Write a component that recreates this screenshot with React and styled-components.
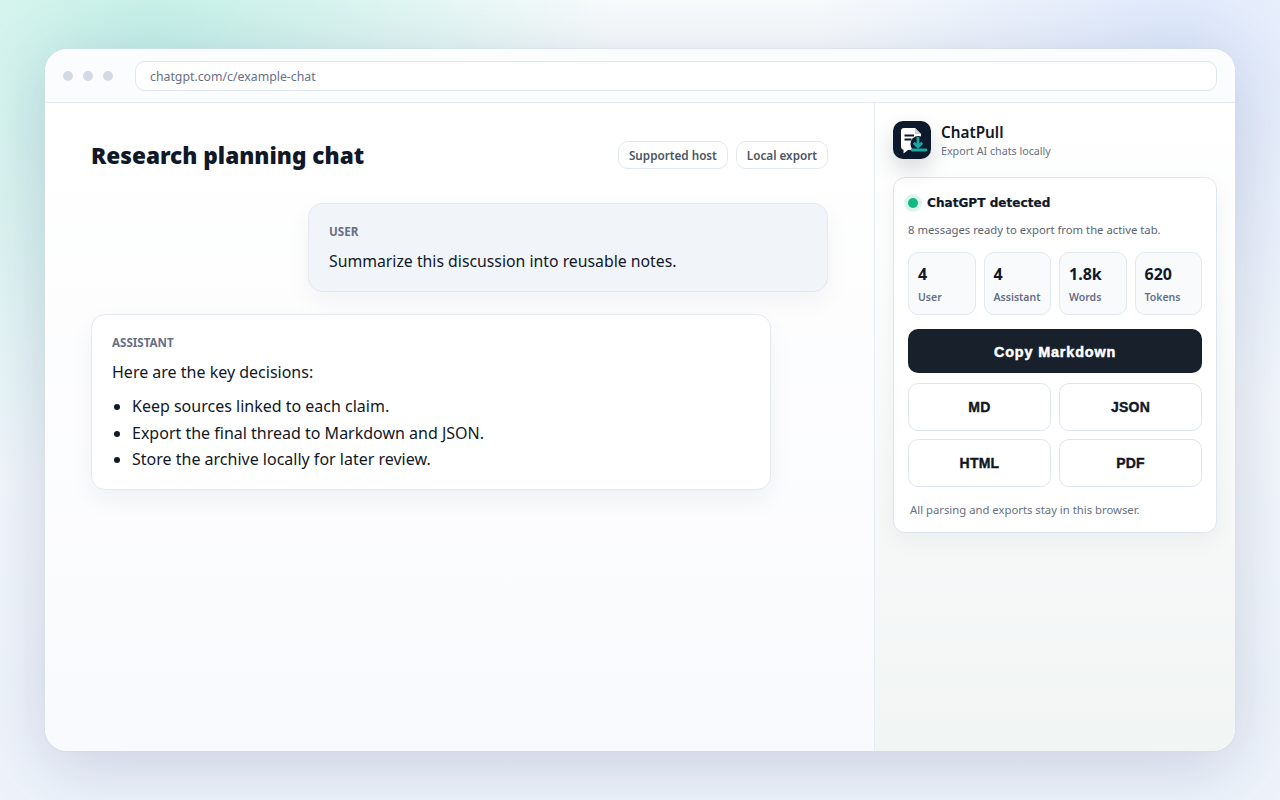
import React from "react";
import styled, { createGlobalStyle } from "styled-components";

const Global = createGlobalStyle`
  html, body { margin: 0; height: 100%; }
  body {
    font-family: "Noto Sans", "Open Sans", sans-serif;
    color: #111827;
    background:
      radial-gradient(circle at 12% 6%, rgba(110, 222, 196, 0.38), transparent 34%),
      radial-gradient(circle at 92% 6%, rgba(150, 180, 250, 0.26), transparent 26%),
      linear-gradient(180deg, #f8fbfc, #eef3fb);
  }
  * { box-sizing: border-box; }
`;

const Page = styled.div`
  width: 1280px;
  height: 800px;
  padding: 49px 45px;
`;

const Browser = styled.div`
  width: 1190px;
  height: 702px;
  border-radius: 22px;
  overflow: hidden;
  background: #fff;
  display: flex;
  flex-direction: column;
  box-shadow: 0 0 0 1px rgba(210, 220, 235, 0.5), 0 14px 70px rgba(45, 60, 110, 0.2);
`;

const Toolbar = styled.div`
  height: 54px;
  flex: none;
  display: flex;
  align-items: center;
  gap: 22px;
  padding: 0 18px;
  background: #fbfcfe;
  border-bottom: 1px solid #e6ebf3;
`;

const Dots = styled.div`
  display: flex;
  gap: 10px;
`;

const Dot = styled.span`
  width: 10px;
  height: 10px;
  border-radius: 50%;
  background: #d3dae6;
`;

const Address = styled.div`
  flex: 1;
  height: 30px;
  display: flex;
  align-items: center;
  padding: 1px 14px 0;
  background: #fff;
  border: 1px solid #dfe6f0;
  border-radius: 10px;
  font-size: 12.3px;
  color: #667085;
`;

const Body = styled.div`
  flex: 1;
  display: flex;
  min-height: 0;
`;

const Chat = styled.main`
  flex: 1;
  padding: 38px 46px;
  background: linear-gradient(180deg, #ffffff, #f9fafd);
`;

const Header = styled.div`
  display: flex;
  align-items: flex-start;
  justify-content: space-between;
  margin-bottom: 33px;
`;

const Title = styled.h1`
  margin: 0;
  padding-top: 1px;
  font-size: 22.6px;
  line-height: 28px;
  font-weight: 900;
  color: #111827;
`;

const Chips = styled.div`
  display: flex;
  gap: 8px;
`;

const Chip = styled.span`
  height: 28px;
  display: flex;
  align-items: center;
  padding: 0 10px;
  background: #fff;
  border: 1px solid #e2e8f0;
  border-radius: 10px;
  font-size: 11.7px;
  font-weight: 600;
  color: #4b5563;
`;

const Bubble = styled.article`
  width: ${(p) => (p.$user ? "520px" : "680px")};
  margin: 0 0 22px ${(p) => (p.$user ? "auto" : "0")};
  padding: 20px 20px 17px;
  background: ${(p) => (p.$user ? "#f1f4f9" : "#fff")};
  border: 1px solid #e4e9f1;
  border-radius: 14px;
  box-shadow: 0 10px 24px rgba(30, 41, 59, 0.05);
`;

const Role = styled.div`
  font-size: 11.6px;
  font-weight: 700;
  line-height: 16px;
  color: #667085;
  margin-bottom: 9px;
`;

const Text = styled.p`
  margin: 0;
  font-size: ${(p) => p.$size || "16px"};
  line-height: 25px;
  color: #111827;
`;

const List = styled.ul`
  margin: 8px 0 -1px;
  padding-left: 20px;
  font-size: 16px;
  line-height: 26.5px;
  color: #111827;
`;

const Side = styled.aside`
  width: 361px;
  flex: none;
  padding: 18px;
  background: linear-gradient(180deg, #ffffff, #f1f5f4);
  border-left: 1px solid #e6ebf3;
`;

const Brand = styled.div`
  display: flex;
  align-items: center;
  gap: 10px;
  margin-bottom: 18px;
`;

const Logo = styled.div`
  width: 38px;
  height: 38px;
  flex: none;
  border-radius: 10px;
  background: #0c1a2c;
  box-shadow: 0 10px 22px rgba(15, 27, 45, 0.16);
`;

const BrandName = styled.div`
  font-size: 15.3px;
  font-weight: 600;
  line-height: 20px;
  color: #111827;
`;

const BrandSub = styled.div`
  margin-top: 1px;
  font-size: 10.7px;
  line-height: 16px;
  color: #667085;
`;

const Card = styled.section`
  padding: 14px;
  background: #fff;
  border: 1px solid #dfe6f0;
  border-radius: 12px;
  box-shadow: 0 8px 20px rgba(30, 41, 59, 0.05);
`;

const Status = styled.div`
  display: flex;
  align-items: center;
  gap: 4px;
  margin: 1px 0 0 -5px;
  font-family: "DejaVu Sans", sans-serif;
  font-size: 12.1px;
  font-weight: 700;
  color: #111827;
  -webkit-text-stroke: 0.2px #111827;
`;

const Pulse = styled.span`
  width: 10px;
  height: 10px;
  margin: 5px;
  border-radius: 50%;
  background: #10b981;
  box-shadow: 0 0 0 4px rgba(16, 185, 129, 0.14);
`;

const Note = styled.p`
  margin: 8px 0 13px;
  font-size: 11.3px;
  line-height: 18px;
  color: #5b6472;
`;

const Stats = styled.div`
  display: grid;
  grid-template-columns: repeat(4, 1fr);
  gap: 8px;
  margin-bottom: 14px;
`;

const Stat = styled.div`
  height: 63px;
  padding: 10px 9px;
  background: #f8fafc;
  border: 1px solid #e2e8f0;
  border-radius: 10px;
`;

const StatValue = styled.div`
  font-size: 16px;
  font-weight: 700;
  line-height: 22px;
  color: #111827;
`;

const StatLabel = styled.div`
  margin-top: 5px;
  font-size: 10.5px;
  font-weight: 600;
  line-height: 14px;
  color: #667085;
`;

const Primary = styled.button`
  width: 100%;
  height: 44px;
  margin-bottom: 10px;
  padding: 2px 0 0;
  border: 0;
  border-radius: 10px;
  background: #18202b;
  color: #fff;
  font-family: "Liberation Sans", Arial, sans-serif;
  font-size: 14.4px;
  font-weight: 700;
  letter-spacing: 0.85px;
  -webkit-text-stroke: 0.5px #fff;
`;

const Formats = styled.div`
  display: grid;
  grid-template-columns: 1fr 1fr;
  gap: 8px;
`;

const Format = styled.button`
  height: 48px;
  background: #fff;
  border: 1px solid #dfe6f0;
  border-radius: 10px;
  color: #111827;
  font-family: "Liberation Sans", Arial, sans-serif;
  font-size: 14px;
  font-weight: 700;
  letter-spacing: 0.25px;
  -webkit-text-stroke: 0.4px #111827;
`;

const Foot = styled.p`
  margin: 15px 0 0 2px;
  font-size: 11.3px;
  line-height: 16px;
  color: #667085;
`;

const stats = [
  ["4", "User"],
  ["4", "Assistant"],
  ["1.8k", "Words"],
  ["620", "Tokens"],
];

function LogoMark() {
  return (
    <svg width="38" height="38" viewBox="0 0 38 38" fill="none">
      <path
        d="M11 7h11l6 6v14a2 2 0 0 1-2 2H15l-4.500 3.500v-3.700A3 3 0 0 1 8 26V10a3 3 0 0 1 3-3z"
        fill="#fff"
      />
      <path d="M22 7v6h6" fill="#c9d2dc" />
      <path d="M11.500 14.500h9.500M11.500 18.500h7" stroke="#0c1a2c" strokeWidth="1.800" />
      <circle cx="25.500" cy="23" r="8" fill="#0c1a2c" />
      <path d="M25 16v10M20.800 21.800l4.200 4.200 4.200-4.200" stroke="#16a9a4" strokeWidth="2.800" />
      <path d="M19 29h14" stroke="#16a9a4" strokeWidth="2.800" strokeLinecap="round" />
    </svg>
  );
}

export default function App() {
  return (
    <Page>
      <Global />
      <Browser>
        <Toolbar>
          <Dots>
            <Dot />
            <Dot />
            <Dot />
          </Dots>
          <Address>chatgpt.com/c/example-chat</Address>
        </Toolbar>
        <Body>
          <Chat>
            <Header>
              <Title>Research planning chat</Title>
              <Chips>
                <Chip>Supported host</Chip>
                <Chip>Local export</Chip>
              </Chips>
            </Header>
            <Bubble $user>
              <Role>USER</Role>
              <Text $size="15.8px">Summarize this discussion into reusable notes.</Text>
            </Bubble>
            <Bubble>
              <Role>ASSISTANT</Role>
              <Text>Here are the key decisions:</Text>
              <List>
                <li>Keep sources linked to each claim.</li>
                <li>Export the final thread to Markdown and JSON.</li>
                <li>Store the archive locally for later review.</li>
              </List>
            </Bubble>
          </Chat>
          <Side>
            <Brand>
              <Logo>
                <LogoMark />
              </Logo>
              <div>
                <BrandName>ChatPull</BrandName>
                <BrandSub>Export AI chats locally</BrandSub>
              </div>
            </Brand>
            <Card>
              <Status>
                <Pulse />
                ChatGPT detected
              </Status>
              <Note>8 messages ready to export from the active tab.</Note>
              <Stats>
                {stats.map(([value, label]) => (
                  <Stat key={label}>
                    <StatValue>{value}</StatValue>
                    <StatLabel>{label}</StatLabel>
                  </Stat>
                ))}
              </Stats>
              <Primary>Copy Markdown</Primary>
              <Formats>
                <Format>MD</Format>
                <Format>JSON</Format>
                <Format>HTML</Format>
                <Format>PDF</Format>
              </Formats>
              <Foot>All parsing and exports stay in this browser.</Foot>
            </Card>
          </Side>
        </Body>
      </Browser>
    </Page>
  );
}
